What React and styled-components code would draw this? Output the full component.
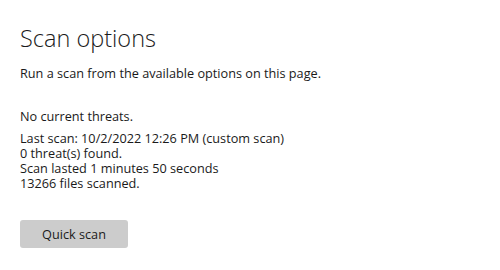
import React from "react";
import styled, { createGlobalStyle } from "styled-components";

const GlobalStyle = createGlobalStyle`
  html, body {
    margin: 0;
    padding: 0;
    background: #ffffff;
  }
  body {
    font-family: "Segoe UI", "Open Sans", "Noto Sans", sans-serif;
    color: #1a1a1a;
  }
`;

const Page = styled.div`
  width: 500px;
  height: 270px;
  box-sizing: border-box;
  padding: 22px 20px 0 20px;
  display: flex;
  flex-direction: column;
  align-items: flex-start;
`;

const Title = styled.h1`
  margin: 0;
  font-size: 23.5px;
  font-weight: 300;
  line-height: 32px;
  color: #1b1b1b;
`;

const Subtitle = styled.p`
  margin: 11px 0 0 0;
  font-size: 12.7px;
  line-height: 17px;
`;

const Status = styled.div`
  margin-top: 27px;
  display: flex;
  flex-direction: column;
`;

const Line = styled.div`
  font-size: 12.7px;
  line-height: 15px;
  margin-bottom: ${(p) => (p.$gap ? "7px" : "0")};
`;

const Button = styled.button`
  margin-top: 29px;
  width: 108px;
  height: 28px;
  border: none;
  border-radius: 3px;
  background: #cccccc;
  color: #1b1b1b;
  font-family: inherit;
  font-size: 12.7px;
  padding: 0;
  cursor: pointer;
`;

const details = [
  "Last scan: 10/2/2022 12:26 PM (custom scan)",
  "0 threat(s) found.",
  "Scan lasted 1 minutes 50 seconds",
  "13266 files scanned.",
];

export default function App() {
  return (
    <>
      <GlobalStyle />
      <Page>
        <Title>Scan options</Title>
        <Subtitle>Run a scan from the available options on this page.</Subtitle>
        <Status>
          <Line $gap>No current threats.</Line>
          {details.map((d) => (
            <Line key={d}>{d}</Line>
          ))}
        </Status>
        <Button>Quick scan</Button>
      </Page>
    </>
  );
}
